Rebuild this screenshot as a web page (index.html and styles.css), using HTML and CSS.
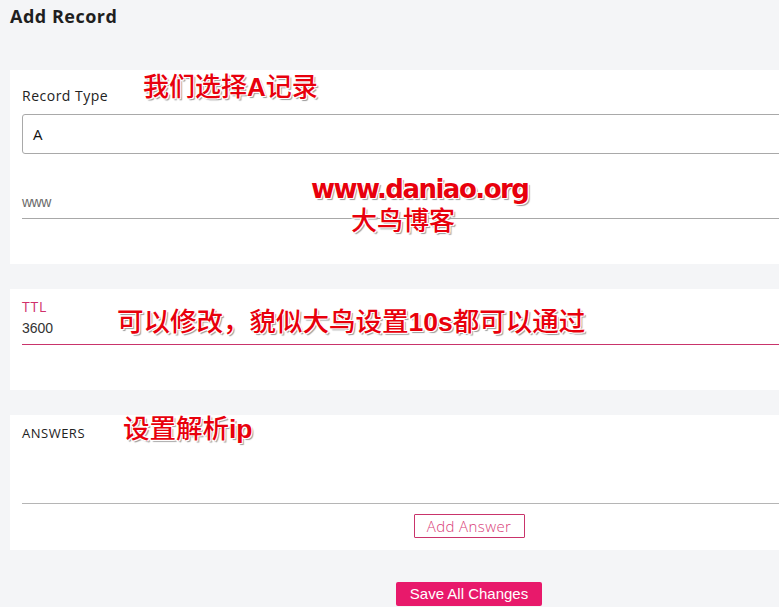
FILE: index.html
```html
<!DOCTYPE html>
<html lang="zh">
<head>
<meta charset="utf-8">
<title>Add Record</title>
<link rel="stylesheet" href="styles.css">
</head>
<body>
<div class="page">
  <h1 class="title">Add Record</h1>

  <section class="card card-type">
    <div class="label">Record Type</div>
    <div class="select">A</div>
    <div class="field field-name">
      <span class="placeholder">www</span>
    </div>
  </section>

  <section class="card card-ttl">
    <div class="label label-pink">TTL</div>
    <div class="field field-ttl">
      <span class="value">3600</span>
    </div>
  </section>

  <section class="card card-answers">
    <div class="label label-caps">ANSWERS</div>
    <div class="answers-area"></div>
    <div class="center-row">
      <button class="btn-outline">Add Answer</button>
    </div>
  </section>

  <div class="center-row save-row">
    <button class="btn-primary">Save All Changes</button>
  </div>

  <div class="note note-1">我们选择<b>A</b>记录</div>
  <div class="note note-2"><b>www.daniao.org</b></div>
  <div class="note note-3">大鸟博客</div>
  <div class="note note-4">可以修改，貌似大鸟设置<b>10s</b>都可以通过</div>
  <div class="note note-5">设置解析<b>ip</b></div>
</div>
</body>
</html>
```

FILE: styles.css
```css
html, body {
  margin: 0;
  padding: 0;
  overflow: hidden;
}
body {
  background: #f4f5f7;
  font-family: "Open Sans", "Noto Sans", sans-serif;
  color: #222;
}
.page {
  position: relative;
  width: 918px;
  margin-left: 10px;
  padding-top: 6px;
}
.title {
  margin: 0;
  font-size: 18px;
  line-height: 20px;
  font-weight: 700;
  letter-spacing: 0.5px;
  color: #1f1f1f;
  height: 64px;
}
.card {
  background: #fff;
  padding: 0 12px;
  box-sizing: border-box;
}
.card-type {
  padding-top: 18px;
  height: 194px;
  margin-bottom: 25px;
}
.card-ttl {
  padding-top: 10px;
  height: 101px;
  margin-bottom: 25px;
}
.card-answers {
  padding-top: 10px;
  height: 135px;
}
.label {
  font-size: 14px;
  line-height: 16px;
  letter-spacing: 0.5px;
  color: #222;
}
.label-pink {
  color: #d0306a;
  letter-spacing: 0.8px;
}
.label-caps {
  font-size: 13px;
  letter-spacing: 0.5px;
}
.select {
  margin-top: 10px;
  height: 40px;
  box-sizing: border-box;
  border: 1px solid #a9a9a9;
  border-radius: 3px;
  padding-left: 10px;
  font-size: 15px;
  line-height: 38px;
  color: #111;
}
.field {
  box-sizing: border-box;
  display: flex;
  align-items: center;
}
.field-name {
  margin-top: 36px;
  height: 29px;
  border-bottom: 1px solid #a8a8a8;
}
.placeholder {
  font-family: "Liberation Sans", Arial, sans-serif;
  font-size: 14px;
  letter-spacing: -0.5px;
  color: #6a6a6a;
  margin-top: -5px;
}
.field-ttl {
  margin-top: 3px;
  height: 27px;
  border-bottom: 1px solid #c9346b;
}
.value {
  font-family: "Liberation Sans", Arial, sans-serif;
  font-size: 14px;
  color: #333;
  margin-top: -6px;
}
.answers-area {
  height: 62px;
  border-bottom: 1px solid #b5b5b5;
}
.center-row {
  display: flex;
  justify-content: center;
}
.card-answers .center-row {
  margin-top: 10px;
}
.btn-outline {
  height: 24px;
  width: 111px;
  padding: 0;
  background: #fff;
  border: 1px solid #c9346b;
  border-radius: 1px;
  color: #d94078;
  font-family: "Open Sans", "Noto Sans", sans-serif;
  font-size: 15px;
  font-weight: 300;
  letter-spacing: 0.4px;
  line-height: 22px;
}
.save-row {
  margin-top: 32px;
}
.btn-primary {
  height: 24px;
  width: 146px;
  padding: 0;
  background: #e8196b;
  border: none;
  border-radius: 2px;
  color: #fff;
  font-family: "Liberation Sans", Arial, sans-serif;
  font-size: 15px;
  line-height: 24px;
}
.note {
  position: absolute;
  color: #e8000c;
  font-family: "Noto Sans CJK SC", "Noto Sans", sans-serif;
  font-weight: 500;
  font-size: 27px;
  line-height: 30px;
  white-space: nowrap;
  text-shadow:
    -1px -1px 0 #fff, 1px -1px 0 #fff, -1px 1px 0 #fff, 1px 1px 0 #fff,
    2px 2px 1px #9a9a9a;
}
.note b {
  font-family: "Liberation Sans", Arial, sans-serif;
  font-weight: 700;
}
.note-1 { left: 133px; top: 70px; font-size: 26px; }
.note-2 { left: 301px; top: 172px; font-size: 26px; }
.note-2 b { font-family: "DejaVu Sans", sans-serif; letter-spacing: -1.5px; }
.note-3 { left: 341px; top: 204px; font-size: 26px; }
.note-4 { left: 107px; top: 305px; font-size: 26.5px; }
.note-5 { left: 113px; top: 412px; font-size: 26.5px; }
```
